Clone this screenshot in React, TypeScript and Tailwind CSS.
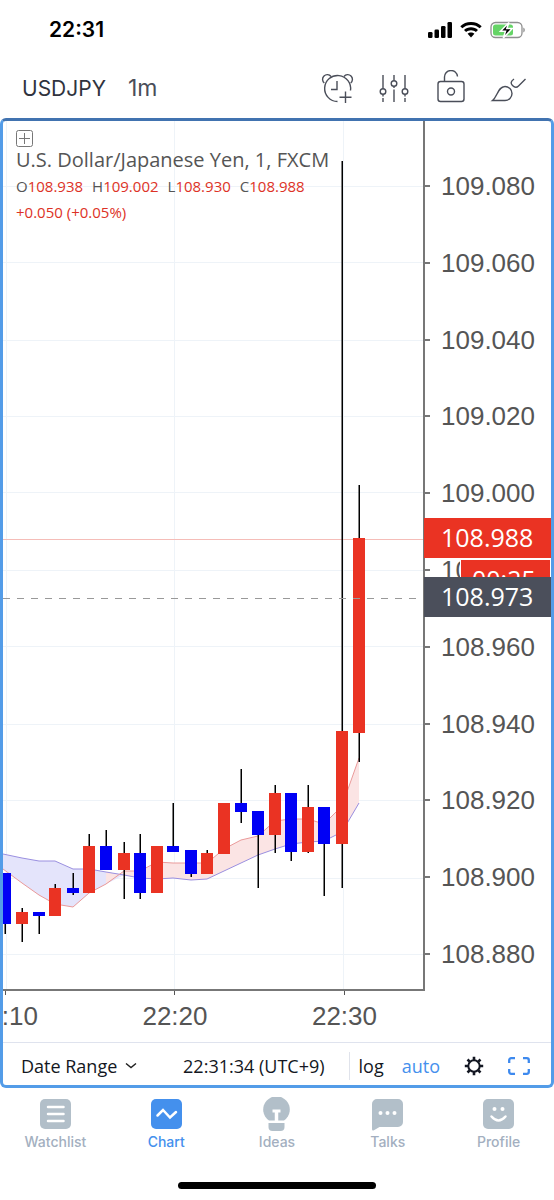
import type { ReactNode } from "react";

type Candle = {
  x: number;
  high: number;
  low: number;
  top: number;
  bottom: number;
  up: boolean;
};

// Values are in the units of the plot's viewBox (420 x 868)
const candles: Candle[] = [
  { x: 2, high: 752, low: 813, top: 752, bottom: 803, up: false },
  { x: 19, high: 787, low: 821, top: 791, bottom: 803, up: true },
  { x: 36, high: 791, low: 813, top: 791, bottom: 795, up: false },
  { x: 52, high: 763, low: 795, top: 767, bottom: 795, up: true },
  { x: 70, high: 752, low: 774, top: 767, bottom: 772, up: false },
  { x: 86, high: 713, low: 772, top: 725, bottom: 772, up: true },
  { x: 103, high: 709, low: 749, top: 725, bottom: 749, up: false },
  { x: 121, high: 721, low: 778, top: 732, bottom: 749, up: true },
  { x: 137, high: 713, low: 778, top: 732, bottom: 772, up: false },
  { x: 154, high: 725, low: 772, top: 725, bottom: 772, up: true },
  { x: 170, high: 682, low: 731, top: 725, bottom: 731, up: false },
  { x: 188, high: 729, low: 756, top: 729, bottom: 753, up: false },
  { x: 204, high: 729, low: 753, top: 732, bottom: 753, up: true },
  { x: 221, high: 682, low: 733, top: 682, bottom: 733, up: true },
  { x: 238, high: 648, low: 702, top: 682, bottom: 691, up: false },
  { x: 255, high: 690, low: 767, top: 690, bottom: 714, up: false },
  { x: 272, high: 664, low: 732, top: 672, bottom: 714, up: true },
  { x: 288, high: 672, low: 740, top: 672, bottom: 731, up: false },
  { x: 305, high: 664, low: 732, top: 686, bottom: 731, up: true },
  { x: 321, high: 686, low: 775, top: 686, bottom: 723, up: false },
  { x: 339, high: 40, low: 767, top: 610, bottom: 723, up: true },
  { x: 356, high: 364, low: 641, top: 417, bottom: 612, up: true },
];

const slowLine =
  "0,733 19,737 36,740 52,740 70,748 86,748 103,751 121,754 137,757 154,758 170,757 188,759 204,758 221,750 238,742 255,734 272,728 288,723 305,721 321,720 339,711 356,682";
const fastLine =
  "0,748 19,762 36,774 52,783 70,786 86,772 103,763 121,750 137,750 154,741 170,742 188,742 204,742 221,728 238,719 255,715 272,700 288,698 305,698 321,703 339,685 356,637";

const gridRows = [65, 141, 219, 295, 371, 449, 525, 603, 679, 757, 833];
const gridColumns = [3, 171, 340];

const prices = [
  "109.080",
  "109.060",
  "109.040",
  "109.020",
  "109.000",
  "108.980",
  "108.960",
  "108.940",
  "108.920",
  "108.900",
  "108.880",
];

const times = [":10", "22:20", "22:30"];

const quotes = [
  { label: "O", value: "108.938" },
  { label: "H", value: "109.002" },
  { label: "L", value: "108.930" },
  { label: "C", value: "108.988" },
];

const StatusBar = () => {
  return (
    <div className="flex h-[60px] items-center justify-between pl-[49px] pr-7">
      <span className="text-[21px] font-semibold text-black">22:31</span>
      <div className="flex items-center gap-2">
        <svg width="24" height="16" viewBox="0 0 24 16">
          <rect x="0" y="10" width="4.500" height="6" rx="1.3" />
          <rect x="6.500" y="7.5" width="4.500" height="8.5" rx="1.3" />
          <rect x="13" y="4" width="4.500" height="12" rx="1.3" />
          <rect x="19.500" y="0" width="4.500" height="16" rx="1.3" />
        </svg>
        <svg width="22" height="16" viewBox="0 0 22 16">
          <path d="M11 0C6.800 0 3 1.600 0.300 4.200l2 2.100C4.600 4.200 7.600 3 11 3s6.400 1.200 8.700 3.300l2-2.100C19 1.600 15.200 0 11 0z" />
          <path d="M11 5.200c-2.700 0-5.200 1-7 2.700l2.100 2.200C7.400 8.900 9.100 8.200 11 8.200s3.600.7 4.900 1.900L18 7.900c-1.800-1.700-4.300-2.700-7-2.700z" />
          <path d="M11 10.500c-1.300 0-2.500.5-3.400 1.300L11 15.500l3.400-3.700c-.9-.8-2.100-1.300-3.400-1.300z" />
        </svg>
        <svg width="36" height="18" viewBox="0 0 36 18">
          <rect
            x="1"
            y="1.500"
            width="31"
            height="15"
            rx="4.500"
            fill="none"
            stroke="#8f8f8f"
            strokeWidth="1.300"
          />
          <path d="M33.300 6.500v5c1-.5 1.500-1.500 1.500-2.500s-.5-2-1.500-2.500z" fill="#8f8f8f" />
          <rect x="3" y="3.500" width="20" height="11" rx="2.500" fill="#65d466" />
          <path
            d="M19 1.500l-8.500 8.800h5L13.300 17l8.900-9.400h-5.400z"
            fill="#000"
            stroke="#fff"
            strokeWidth="1.500"
          />
        </svg>
      </div>
    </div>
  );
};

const ToolButton = ({
  label,
  children,
}: {
  label: string;
  children: ReactNode;
}) => {
  return (
    <button type="button" aria-label={label}>
      <svg
        width="36"
        height="36"
        viewBox="0 0 36 36"
        fill="none"
        stroke="#4a4e59"
        strokeWidth="1.400"
      >
        {children}
      </svg>
    </button>
  );
};

const Toolbar = () => {
  return (
    <header className="flex h-[58px] items-center justify-between pb-0.5 pl-[22px] pr-7 text-[#4a4e59]">
      <div className="flex items-baseline gap-[22px]">
        <button type="button" className="text-[21px] text-[#30333e]">
          USDJPY
        </button>
        <button type="button" className="text-[23px]">
          1m
        </button>
      </div>
      <div className="flex gap-[21px]">
        <ToolButton label="Add alert">
          <path d="M18.500 31.500a13 13 0 1 1 13-11" />
          <path d="M18 11v8.500h-6M26.500 21.500v11.500M20.500 27.300h12" />
          <path d="M5.300 13a4.700 4.700 0 1 1 6.700-6.500M25 6.500a4.700 4.700 0 1 1 6.700 6.500" />
        </ToolButton>
        <ToolButton label="Indicators">
          <path d="M7 5v13.700M7 24.300v2.200M7 28v4M18 5v5.700M18 16.300v1.700M18 19.500V32M29 5v13.700M29 24.300v2.200M29 28v4" />
          <circle cx="7" cy="21.500" r="2.800" />
          <circle cx="18" cy="13.500" r="2.800" />
          <circle cx="29" cy="21.500" r="2.800" />
        </ToolButton>
        <ToolButton label="Lock drawings">
          <rect x="5" y="11.500" width="26" height="20" rx="2.500" />
          <circle cx="18" cy="21.500" r="3.500" />
          <path d="M11.500 11.500V7.500a6.500 6.500 0 0 1 13-1" />
        </ToolButton>
        <ToolButton label="Draw">
          <path d="M2.500 30.500C7.500 26.500 8 16.500 15 16.500a7 7 0 0 1 0 14z" />
          <path d="M24 9c-3.500 2.500-3.500 4.500-1.500 6.500 2 2 4 2.500 6 .5L35.500 9" />
        </ToolButton>
      </div>
    </header>
  );
};

const Plot = () => {
  return (
    <svg
      className="block h-full w-full"
      viewBox="0 0 420 868"
      preserveAspectRatio="none"
      role="img"
      aria-label="USDJPY one minute candles"
    >
      {gridRows.map((y) => (
        <rect key={y} x="0" y={y} width="420" height="1" fill="#eef3f8" />
      ))}
      {gridColumns.map((x) => (
        <rect key={x} x={x} y="0" width="1" height="868" fill="#eef3f8" />
      ))}
      <polygon
        points="0,733 19,737 36,740 52,740 70,748 86,748 103,751 121,754 103,763 86,772 70,786 52,783 36,774 19,762 0,748"
        fill="#e4e4fb"
      />
      <polygon
        points="103,751 121,754 137,757 154,758 170,757 188,759 204,758 221,750 238,742 255,734 272,728 288,723 305,721 321,720 339,711 356,682 356,637 339,685 321,703 305,698 288,698 272,700 255,715 238,719 221,728 204,742 188,742 170,742 154,741 137,750 121,750 103,763"
        fill="#fbe4e4"
      />
      <polyline points={slowLine} fill="none" stroke="#9a8fe0" />
      <polyline points={fastLine} fill="none" stroke="#ea9a9a" />
      <rect x="0" y="418" width="420" height="1" fill="#f5bdb8" />
      {candles.map((candle) => (
        <g key={candle.x}>
          <rect
            x={candle.x - 0.500}
            y={candle.high}
            width="1.500"
            height={candle.low - candle.high}
            fill="#000"
          />
          <rect
            x={candle.x - 6}
            y={candle.top}
            width="12"
            height={candle.bottom - candle.top}
            fill={candle.up ? "#ea3323" : "#0000f5"}
          />
        </g>
      ))}
      <path d="M0 477.500H420" stroke="#999" strokeDasharray="7 7" />
    </svg>
  );
};

const Legend = () => {
  return (
    <div className="absolute left-[13px] top-2 font-['Open_Sans',sans-serif] text-[#555]">
      <button type="button" aria-label="Expand legend" className="block">
        <svg width="18" height="18" viewBox="0 0 18 18" fill="none" stroke="#777">
          <rect x="0.500" y="1.500" width="16" height="16" rx="2" />
          <path d="M8.500 4v11M3 9.500h11" />
        </svg>
      </button>
      <h1 className="whitespace-nowrap text-[20px] leading-[26px]">
        U.S. Dollar/Japanese Yen, 1, FXCM
      </h1>
      <div className="flex gap-[9px] text-[15px] leading-[26px]">
        {quotes.map((quote) => (
          <span key={quote.label}>
            {quote.label}
            <span className="text-[#dd3226]">{quote.value}</span>
          </span>
        ))}
      </div>
      <p className="text-[15px] leading-[26px] text-[#dd3226]">
        +0.050 (+0.05%)
      </p>
    </div>
  );
};

const PriceAxis = () => {
  return (
    <div className="relative w-[126px] shrink-0 text-[26px] leading-[30px]">
      <ul className="flex h-full flex-col justify-between pb-[22px] pt-[50px]">
        {prices.map((price) => (
          <li key={price} className="flex items-center gap-[11px]">
            <span className="h-[2px] w-[5px] bg-[#777]" />
            {price}
          </li>
        ))}
      </ul>
      <div className="absolute right-0 top-[438px] h-10 w-[91px] border border-white bg-[#ea3323] pl-[11px] font-['Open_Sans',sans-serif] text-[25px] leading-[38px] text-white">
        00:25
      </div>
      <div className="absolute -left-px right-0 top-[397px] h-10 bg-[#ea3323] pl-[17px] font-['Open_Sans',sans-serif] text-[25px] leading-[38px] text-white">
        108.988
      </div>
      <div className="absolute -left-px right-0 top-[456px] h-10 bg-[#4b4f5b] pl-[17px] font-['Open_Sans',sans-serif] text-[25px] leading-[38px] text-white">
        108.973
      </div>
    </div>
  );
};

const TimeAxis = () => {
  return (
    <div className="h-[51px] overflow-hidden">
      <ul className="-ml-[31px] mr-[174px] flex justify-between text-[26px] leading-[30px]">
        {times.map((time) => (
          <li key={time} className="flex w-[66px] flex-col items-center gap-1.5">
            <span className="h-1 w-px bg-[#555]" />
            <span className="w-full text-right">{time}</span>
          </li>
        ))}
      </ul>
    </div>
  );
};

const BottomBar = () => {
  return (
    <div className="flex h-[43px] items-center border-t border-[#dfe3ee] pl-[18px] pr-[21px] pt-1 font-['Open_Sans',sans-serif] text-lg text-[#131722]">
      <button type="button" className="flex items-center gap-2">
        Date Range
        <svg width="12" height="6" viewBox="0 0 12 6" fill="none" stroke="#222">
          <path d="M1 0.500l5 4 5-4" strokeWidth="1.400" />
        </svg>
      </button>
      <button type="button" className="ml-auto mr-6">
        22:31:34 (UTC+9)
      </button>
      <div className="flex items-center gap-6">
        <div className="flex items-center gap-[18px] border-l border-[#e0e3eb] pl-[9px]">
          <button type="button">log</button>
          <button type="button" className="text-[#4490ed]">
            auto
          </button>
        </div>
        <button type="button" aria-label="Chart settings">
          <svg width="20" height="20" viewBox="0 0 20 20" fill="none" stroke="#131722">
            <circle cx="10" cy="10" r="5.700" strokeWidth="2" />
            <path
              d="M10 0.800v3.500M10 15.700v3.500M0.800 10H4.300M15.700 10h3.500M3.500 3.500l2.200 2.200M14.300 14.300l2.200 2.200M3.500 16.500l2.200-2.200M14.300 5.700l2.200-2.200"
              strokeWidth="2.600"
            />
          </svg>
        </button>
        <button type="button" aria-label="Full screen">
          <svg width="22" height="18" viewBox="0 0 22 18" fill="none" stroke="#3d89ee">
            <path
              d="M1.200 6V3.200a2 2 0 0 1 2-2H7M15 1.200h3.800a2 2 0 0 1 2 2V6M20.800 12v2.800a2 2 0 0 1-2 2H15M7 16.800H3.200a2 2 0 0 1-2-2V12"
              strokeWidth="2.300"
            />
          </svg>
        </button>
      </div>
    </div>
  );
};

const tabs: { label: string; active?: boolean; icon: ReactNode }[] = [
  {
    label: "Watchlist",
    icon: (
      <>
        <rect x="1" y="2" width="31" height="30" rx="5" fill="currentColor" />
        <path
          d="M9 10h15.500M9 17h15.500M9 24h15.500"
          stroke="#fff"
          strokeWidth="2.500"
          strokeLinecap="round"
        />
      </>
    ),
  },
  {
    label: "Chart",
    active: true,
    icon: (
      <>
        <rect x="1" y="2" width="31" height="30" rx="5" fill="currentColor" />
        <path
          d="M7.500 18.500l5.500-5.500 7 7.500 6-5.500"
          fill="none"
          stroke="#fff"
          strokeWidth="2.500"
          strokeLinecap="round"
        />
      </>
    ),
  },
  {
    label: "Ideas",
    icon: (
      <>
        <path
          d="M9 23.500a13.300 13.300 0 1 1 15 0z"
          fill="currentColor"
        />
        <path d="M8.500 26h16v4a4 4 0 0 1-4 4h-8a4 4 0 0 1-4-4z" fill="currentColor" />
        <path d="M12.500 14h8" stroke="#fff" strokeWidth="3" />
        <path d="M16.500 14v11" stroke="#fff" strokeWidth="3.500" />
      </>
    ),
  },
  {
    label: "Talks",
    icon: (
      <>
        <path
          d="M6 2h21a5 5 0 0 1 5 5v18a5 5 0 0 1-5 5H8.500L2.500 33.500Q1 34 1 32V7a5 5 0 0 1 5-5z"
          fill="currentColor"
        />
        <circle cx="9.500" cy="16" r="2" fill="#fff" />
        <circle cx="16.500" cy="16" r="2" fill="#fff" />
        <circle cx="23.500" cy="16" r="2" fill="#fff" />
      </>
    ),
  },
  {
    label: "Profile",
    icon: (
      <>
        <rect x="1" y="2" width="31" height="30" rx="5" fill="currentColor" />
        <circle cx="12.500" cy="12" r="2" fill="#fff" />
        <circle cx="20.500" cy="12" r="2" fill="#fff" />
        <path
          d="M9.500 19.500q7 8 14 0"
          fill="none"
          stroke="#fff"
          strokeWidth="2.500"
          strokeLinecap="round"
        />
      </>
    ),
  },
];

const TabBar = () => {
  return (
    <nav className="grid grid-cols-5 pt-[9px]">
      {tabs.map((tab) => (
        <a
          key={tab.label}
          href="#"
          className={
            tab.active
              ? "flex flex-col items-center gap-px text-[#4490ed]"
              : "flex flex-col items-center gap-px text-[#b2bfc9]"
          }
        >
          <svg width="33" height="36" viewBox="0 0 33 36">
            {tab.icon}
          </svg>
          <span
            className={
              tab.active
                ? "text-[14px] font-medium leading-4"
                : "text-[14px] font-medium leading-4 text-[#a3afc0]"
            }
          >
            {tab.label}
          </span>
        </a>
      ))}
    </nav>
  );
};

export default function App() {
  return (
    <div className="flex min-h-screen flex-col bg-white font-['Inter',sans-serif]">
      <StatusBar />
      <Toolbar />
      <main className="flex flex-col overflow-hidden rounded-md border-[3px] border-[#539ce8] border-t-[#4173b0] font-['Liberation_Sans',Arial,sans-serif] text-[#555]">
        <div className="flex h-[870px]">
          <div className="relative min-w-0 flex-1 border-b-2 border-r-2 border-b-[#777] border-r-[#777]">
            <Plot />
            <Legend />
          </div>
          <PriceAxis />
        </div>
        <TimeAxis />
        <BottomBar />
      </main>
      <TabBar />
      <div className="mx-auto mb-[11px] mt-auto h-[7px] w-[198px] rounded-full bg-black" />
    </div>
  );
}
